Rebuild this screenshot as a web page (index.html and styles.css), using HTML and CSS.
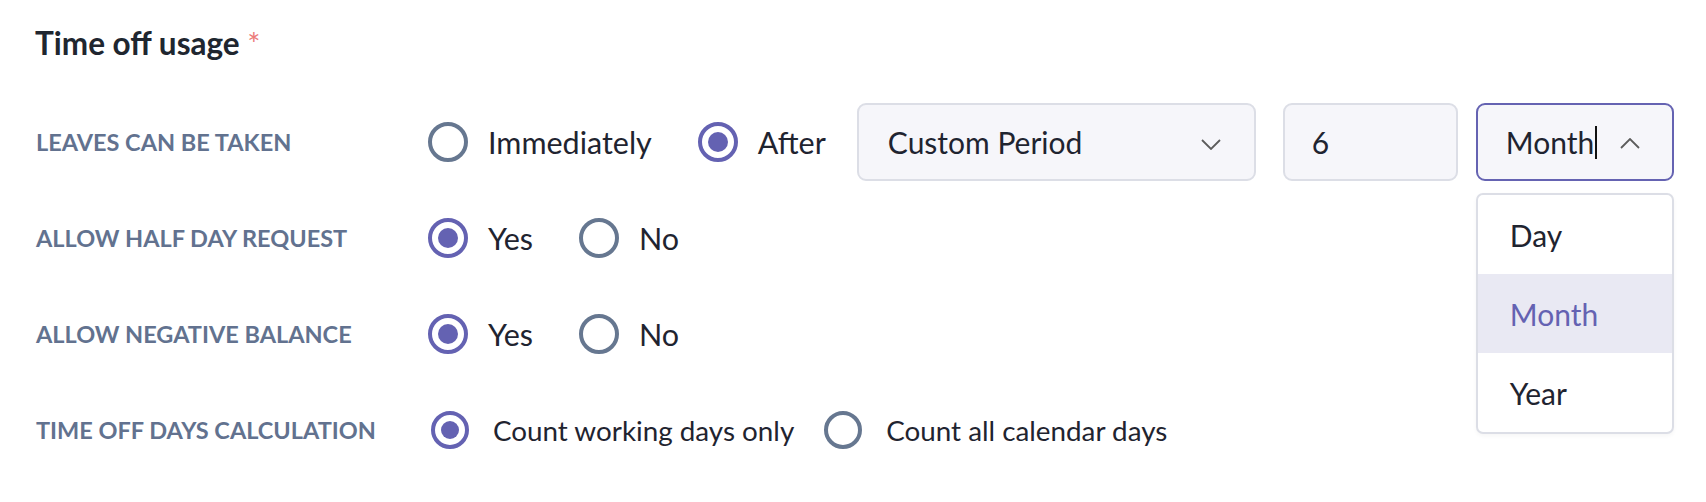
FILE: index.html
```html
<!DOCTYPE html>
<html>
<head>
<meta charset="utf-8">
<link rel="stylesheet" href="styles.css">
</head>
<body>
<div class="page">
  <h2 class="title">Time off usage <span class="req">*</span></h2>
  <div class="rows">
    <div class="row">
      <div class="label">LEAVES CAN BE TAKEN</div>
      <div class="opts">
        <label class="opt"><span class="radio"></span><span class="otext">Immediately</span></label>
        <label class="opt"><span class="radio on"></span><span class="otext">After</span></label>
        <div class="field f-period"><span>Custom Period</span>
          <svg class="chev" width="20" height="11" viewBox="0 0 20 11"><polyline points="1,1 10,10 19,1" fill="none" stroke="#5c5c5c" stroke-width="1.8"/></svg>
        </div>
        <div class="field f-num"><span>6</span></div>
        <div class="field f-unit focus"><span class="val">Month<span class="caret"></span></span>
          <svg class="chev" width="20" height="11" viewBox="0 0 20 11"><polyline points="1,10 10,1 19,10" fill="none" stroke="#5c5c5c" stroke-width="1.8"/></svg>
          <div class="menu">
            <div class="item">Day</div>
            <div class="item sel">Month</div>
            <div class="item">Year</div>
          </div>
        </div>
      </div>
    </div>
    <div class="row">
      <div class="label">ALLOW HALF DAY REQUEST</div>
      <div class="opts">
        <label class="opt"><span class="radio on"></span><span class="otext">Yes</span></label>
        <label class="opt"><span class="radio"></span><span class="otext">No</span></label>
      </div>
    </div>
    <div class="row">
      <div class="label">ALLOW NEGATIVE BALANCE</div>
      <div class="opts">
        <label class="opt"><span class="radio on"></span><span class="otext">Yes</span></label>
        <label class="opt"><span class="radio"></span><span class="otext">No</span></label>
      </div>
    </div>
    <div class="row">
      <div class="label">TIME OFF DAYS CALCULATION</div>
      <div class="opts small">
        <label class="opt"><span class="radio on"></span><span class="otext">Count working days only</span></label>
        <label class="opt"><span class="radio"></span><span class="otext">Count all calendar days</span></label>
      </div>
    </div>
  </div>
</div>
</body>
</html>
```
FILE: styles.css
```css
* { box-sizing: border-box; }
html, body { margin: 0; padding: 0; background: #ffffff; }
body { font-family: Lato, "Open Sans", sans-serif; color: #1f2430; }
.page { padding: 23px 35px 0 35px; }
.title {
  margin: 0;
  height: 40px;
  font-size: 31.5px;
  line-height: 40px;
  font-weight: 700;
  color: #20262f;
}
.req { color: #ec7b7b; font-weight: 400; font-size: 31px; line-height: 0; }
.rows { margin-top: 31px; }
.row {
  display: flex;
  align-items: center;
  height: 96px;
}
.label {
  width: 393px;
  flex: none;
  font-size: 23.5px;
  font-weight: 700;
  color: #62728f;
  padding-left: 1px;
}
.opts { display: flex; align-items: center; }
.opt { display: flex; align-items: center; margin-right: 46px; }
.radio {
  width: 40px;
  height: 40px;
  border: 4px solid #667790;
  border-radius: 50%;
  display: flex;
  align-items: center;
  justify-content: center;
  flex: none;
}
.radio.on { border-color: #6462b2; }
.radio.on::after {
  content: "";
  width: 20px;
  height: 20px;
  border-radius: 50%;
  background: #6462b2;
}
.otext { margin-left: 20px; font-size: 30.5px; color: #1f2430; }
.row:first-child .opt:nth-child(2) { margin-right: 31px; }
.small .radio { width: 38px; height: 38px; margin-left: 3px; }
.small .radio.on::after { width: 18px; height: 18px; }
.small .otext { font-size: 27.8px; margin-left: 24px; }
.small .opt { margin-right: 27px; }
.field {
  position: relative;
  height: 78px;
  border: 2px solid #dcdee6;
  border-radius: 9px;
  background: #f6f6fa;
  display: flex;
  align-items: center;
  font-size: 30px;
  color: #1f2430;
}
.f-period { width: 399px; padding-left: 29px; margin-right: 27px; }
.f-num { width: 175px; padding-left: 27px; margin-right: 18px; }
.f-unit { width: 198px; padding-left: 28px; }
.f-unit.focus { border-color: #6563b2; }
.chev { position: absolute; top: 34px; }
.f-period .chev { right: 33px; }
.f-unit .chev { right: 32px; top: 33px; }
.val { display: inline-flex; align-items: center; }
.caret { display: inline-block; width: 2px; height: 33px; background: #111; margin-left: 1px; }
.menu {
  position: absolute;
  left: -2px;
  top: 88px;
  width: 198px;
  background: #fff;
  border: 2px solid #dcdee6;
  border-radius: 7px;
  overflow: hidden;
  box-shadow: 0 2px 4px rgba(0,0,0,0.04);
}
.item {
  height: 79px;
  display: flex;
  align-items: center;
  padding-left: 32px;
  font-size: 30px;
  color: #1f2430;
}
.item.sel { background: #e9e9f3; color: #6462b2; }
```
